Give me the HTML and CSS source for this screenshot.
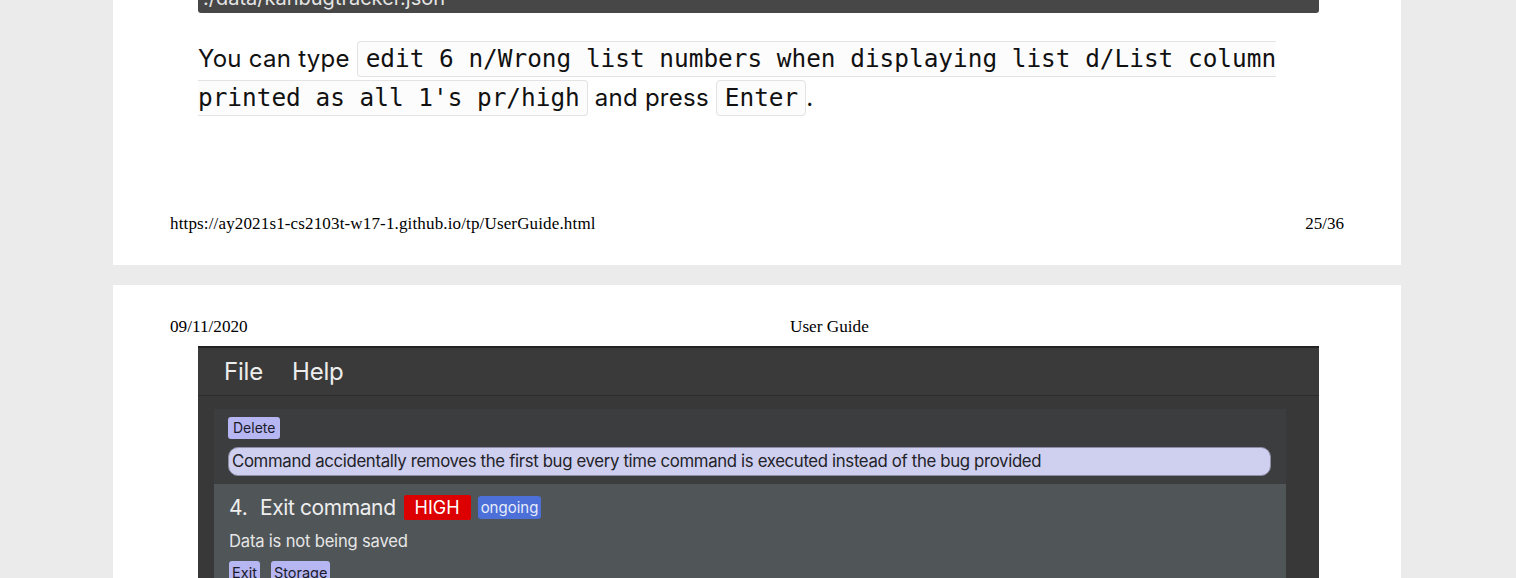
FILE: index.html
```html
<!DOCTYPE html>
<html>
<head>
<meta charset="utf-8">
<link rel="stylesheet" href="styles.css">
</head>
<body>
<div class="sheet sheet-one">
  <div class="shot-strip"><span class="strip-text">./data/kanbugtracker.json</span></div>
  <p class="para">You can type <code class="code">edit 6 n/Wrong list numbers when displaying list d/List column printed as all 1's pr/high</code> and press <code class="code">Enter</code>.</p>
  <div class="print-footer">
    <span class="url">https://ay2021s1-cs2103t-w17-1.github.io/tp/UserGuide.html</span>
    <span>25/36</span>
  </div>
</div>
<div class="sheet sheet-two">
  <div class="print-header">
    <span>09/11/2020</span>
    <span>User Guide</span>
  </div>
  <div class="app">
    <div class="menubar">
      <span class="menu-item">File</span>
      <span class="menu-item">Help</span>
    </div>
    <div class="app-body">
      <div class="panel">
        <div class="tag-row"><span class="tag">Delete</span></div>
        <div class="pill">Command accidentally removes the first bug every time command is executed instead of the bug provided</div>
      </div>
      <div class="card">
        <div class="card-title">
          <span class="card-index">4.</span>
          <span class="card-name">Exit command</span>
          <span class="prio">HIGH</span>
          <span class="state">ongoing</span>
        </div>
        <div class="card-desc">Data is not being saved</div>
        <div class="tag-row tag-row-gap"><span class="tag">Exit</span><span class="tag">Storage</span></div>
      </div>
    </div>
  </div>
</div>
</body>
</html>
```
FILE: styles.css
```css
html, body {
  margin: 0;
  padding: 0;
}
body {
  background: #ebebeb;
  font-family: Inter, "Noto Sans", sans-serif;
  overflow: hidden;
  height: 578px;
}
.sheet {
  background: #ffffff;
  margin: 0 115px 0 113px;
  width: 1288px;
}
.sheet-one {
  height: 265px;
  display: flex;
  flex-direction: column;
}
.sheet-two {
  margin-top: 20px;
  height: 300px;
  overflow: hidden;
}
.shot-strip {
  margin-left: 85px;
  width: 1121px;
  height: 13px;
  background: #474747;
  border-radius: 0 0 3px 3px;
  overflow: hidden;
}
.strip-text {
  display: block;
  margin-top: -13px;
  margin-left: 5px;
  font-size: 20px;
  line-height: 22px;
  color: #e4e4e4;
}
.para {
  margin: 26px 0 0 85px;
  width: 1092px;
  font-size: 24px;
  line-height: 39px;
  color: #111111;
  letter-spacing: 0.25px;
}
.code {
  font-family: "DejaVu Sans Mono", monospace;
  font-size: 24.4px;
  letter-spacing: 0;
  background: #fcfcfc;
  border: 1px solid #e3e3e3;
  border-radius: 4px;
  padding: 2px 7px 3px 8px;
  color: #111111;
}
.print-footer {
  margin-top: auto;
  padding: 0 57px 32px 57px;
  display: flex;
  justify-content: space-between;
  font-family: "Liberation Serif", serif;
  font-size: 17px;
  line-height: 18px;
  color: #000000;
}
.url {
  letter-spacing: 0.15px;
}
.print-header {
  padding: 33px 57px 0 57px;
  display: grid;
  grid-template-columns: 620px auto;
  font-family: "Liberation Serif", serif;
  font-size: 17.2px;
  line-height: 18px;
  color: #000000;
}
.app {
  margin: 10px 0 0 85px;
  width: 1121px;
  background: #383838;
  border-top: 2px solid #222222;
  height: 260px;
}
.menubar {
  height: 47px;
  background: #3a3a3a;
  border-bottom: 1px solid #2c2c2c;
  display: flex;
  align-items: center;
  gap: 29px;
  padding-left: 26px;
}
.menu-item {
  font-size: 24px;
  color: #ededed;
  letter-spacing: -0.2px;
}
.app-body {
  padding: 13px 33px 0 16px;
}
.panel {
  background: #3c3d3f;
  padding: 8px 15px 8px 14px;
}
.tag-row {
  display: flex;
  gap: 11px;
}
.tag {
  background: #b6b6f2;
  color: #1a1a2a;
  font-size: 14px;
  line-height: 22px;
  padding: 0 5px;
  border-radius: 3px;
}
.pill {
  margin-top: 8px;
  background: #cfd0ef;
  border: 1px solid #8d8da6;
  border-radius: 10px;
  height: 27px;
  line-height: 27px;
  padding: 0 3px;
  font-size: 16.8px;
  color: #222228;
  letter-spacing: -0.35px;
  white-space: nowrap;
}
.card {
  background: #505558;
  padding: 11px 15px 0 15px;
  height: 200px;
}
.card-title {
  display: flex;
  align-items: center;
  height: 25px;
  color: #eeeeee;
}
.card-index {
  font-size: 21px;
  width: 31px;
}
.card-name {
  font-size: 21px;
  letter-spacing: -0.4px;
  margin-right: 8px;
}
.prio {
  background: #dd0000;
  color: #ffffff;
  font-size: 18px;
  line-height: 25px;
  padding: 0 11px;
  border-radius: 2px;
  margin-right: 7px;
}
.state {
  background: #4c70d8;
  color: #e8ecfa;
  font-size: 15px;
  line-height: 23px;
  padding: 0 3px;
  border-radius: 3px;
}
.card-desc {
  margin-top: 10px;
  font-size: 16.6px;
  line-height: 22px;
  color: #e6e6e6;
  letter-spacing: -0.2px;
}
.tag-row-gap {
  margin-top: 9px;
}
.tag-row-gap .tag {
  font-size: 14.5px;
  line-height: 24px;
  padding: 0 3px;
}
```
